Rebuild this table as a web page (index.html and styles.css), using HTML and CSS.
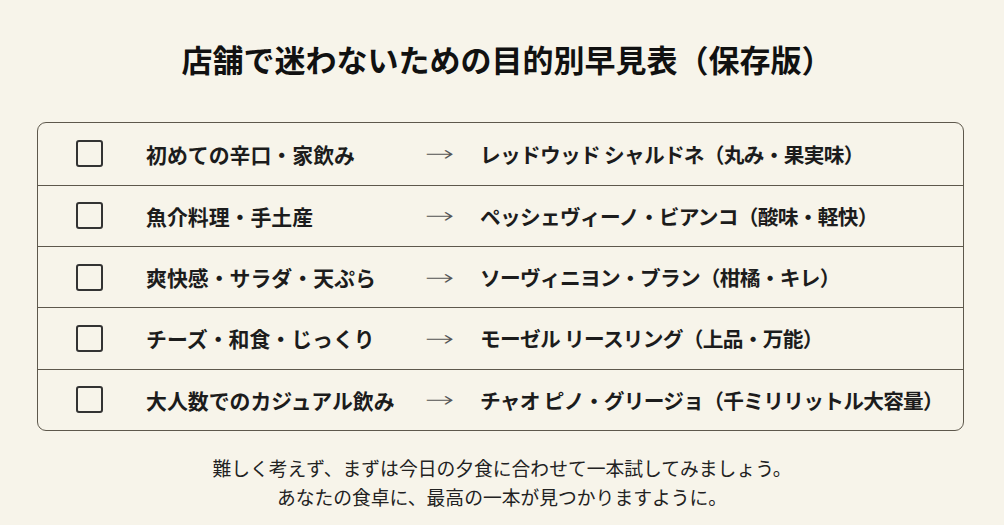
FILE: index.html
```html
<!DOCTYPE html>
<html lang="ja">
<head>
<meta charset="utf-8">
<link rel="stylesheet" href="styles.css">
</head>
<body>
<h1 class="title">店舗で迷わないための目的別早見表（保存版）</h1>
<div class="table">
  <div class="row"><span class="box"></span><span class="left">初めての辛口・家飲み</span><span class="arrow">→</span><span class="right">レッドウッド シャルドネ（丸み・果実味）</span></div>
  <div class="row"><span class="box"></span><span class="left">魚介料理・手土産</span><span class="arrow">→</span><span class="right">ペッシェヴィーノ・ビアンコ（酸味・軽快）</span></div>
  <div class="row"><span class="box"></span><span class="left">爽快感・サラダ・天ぷら</span><span class="arrow">→</span><span class="right">ソーヴィニヨン・ブラン（柑橘・キレ）</span></div>
  <div class="row"><span class="box"></span><span class="left">チーズ・和食・じっくり</span><span class="arrow">→</span><span class="right">モーゼル リースリング（上品・万能）</span></div>
  <div class="row"><span class="box"></span><span class="left">大人数でのカジュアル飲み</span><span class="arrow">→</span><span class="right">チャオ ピノ・グリージョ（千ミリリットル大容量）</span></div>
</div>
<p class="note">難しく考えず、まずは今日の夕食に合わせて一本試してみましょう。<br>あなたの食卓に、最高の一本が見つかりますように。</p>
</body>
</html>
```
FILE: styles.css
```css
html, body {
  margin: 0;
  padding: 0;
}
body {
  background: #f7f4ea;
  color: #1a1a1a;
  font-family: "Noto Sans CJK JP", "Noto Sans", sans-serif;
  width: 1004px;
  height: 525px;
  overflow: hidden;
}
.title {
  margin: 0;
  padding: 40px 0 0 10px;
  height: 41px;
  line-height: 38px;
  text-align: center;
  font-size: 31px;
  font-weight: 700;
  color: #111;
}
.table {
  margin: 41px 40px 0 37px;
  border: 1.5px solid #5e584c;
  border-radius: 9px;
}
.row {
  display: flex;
  align-items: center;
  height: 60.4px;
  border-top: 1.5px solid #5e584c;
}
.row:first-child {
  border-top: none;
  height: 61.5px;
}
.box {
  flex: none;
  width: 23px;
  height: 23px;
  border: 2px solid #333;
  border-radius: 3px;
  margin-left: 38px;
  margin-right: 43px;
}
.left {
  flex: none;
  width: 279px;
  font-size: 20.9px;
  font-weight: 700;
  color: #1c1c1c;
}
.arrow {
  flex: none;
  width: 55px;
  font-size: 22px;
  font-weight: 300;
  color: #555;
  font-family: "DejaVu Sans", sans-serif;
  transform: scaleX(1.6);
  transform-origin: left center;
}
.right {
  font-size: 20.7px;
  font-weight: 700;
  color: #1c1c1c;
  letter-spacing: -0.7px;
}
.note {
  margin: 22px 0 0;
  text-align: center;
  font-size: 18.8px;
  line-height: 29px;
  color: #222;
}
```
